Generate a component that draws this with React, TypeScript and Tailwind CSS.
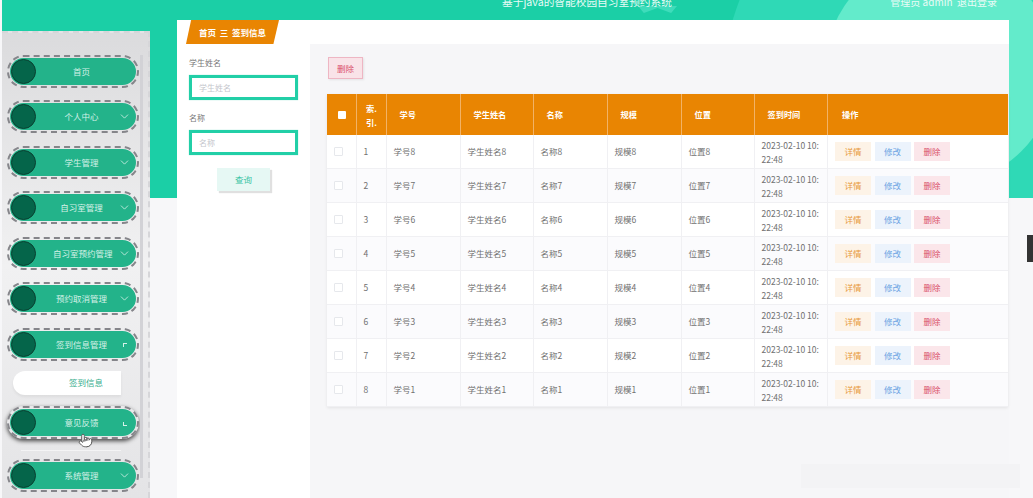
import React from 'react';
import { ChevronDown, Pointer } from 'lucide-react';

const font = { fontFamily: '"Noto Sans CJK SC", "Noto Sans", sans-serif' };

const menus = [
  { label: '首页', arrow: false },
  { label: '个人中心', arrow: true },
  { label: '学生管理', arrow: true },
  { label: '自习室管理', arrow: true },
  { label: '自习室预约管理', arrow: true },
  { label: '预约取消管理', arrow: true },
];

const rows = [8, 7, 6, 5, 4, 3, 2, 1];

const MenuItem = ({ label, arrow = true, corner, hover }: { label: string; arrow?: boolean; corner?: 'up' | 'down'; hover?: boolean }) => (
  <div className={`h-[33px] w-[132px] rounded-full border-2 border-dashed border-[#85858a] p-[1px] ${hover ? 'shadow-[0_2px_4px_rgba(0,0,0,0.7)]' : ''}`}>
    <div className="relative flex h-full items-center rounded-full bg-[#23b38a] pl-[43px] pr-[26px]">
      <div className="absolute left-[1px] top-[1px] h-[25px] w-[25px] rounded-full border border-[#0a3f30] bg-[#05654a]" />
      <span className="flex-1 whitespace-nowrap text-center text-[8.5px] text-[#d5f1e7]">{label}</span>
      {arrow && !corner && <ChevronDown size={13} strokeWidth={1.5} className="absolute right-[5px] text-[#d5f1e8]" />}
      {corner === 'up' && <span className="absolute right-[9px] top-[12px] h-[4px] w-[4px] border-l border-t border-[#d5f1e8]" />}
      {corner === 'down' && <span className="absolute right-[9px] top-[13px] h-[4px] w-[4px] border-b border-l border-[#d5f1e8]" />}
    </div>
  </div>
);

const Sidebar = () => (
  <aside className="relative flex h-[467px] w-[148px] shrink-0 flex-col overflow-hidden border-r-2 border-t-2 border-dashed border-[#d6d6d9] bg-gradient-to-b from-[#dbdbdd] via-[#f1f1f2] to-[#e4e4e6] pl-[5px] pt-[21.5px]">
    <div className="absolute right-[5px] top-[22px] h-[423px] w-[3px] bg-[#d2d2d6]" />
    <div className="flex flex-col gap-[12.5px]">
      {menus.map((m) => (
        <MenuItem key={m.label} label={m.label} arrow={m.arrow} />
      ))}
      <MenuItem label="签到信息管理" corner="up" />
    </div>
    <div className="ml-[6px] mt-[10px] flex h-[24px] w-[108px] items-center justify-end rounded-l-full bg-white pr-[18px] text-[8.5px] text-[#36ad8c] shadow-[0_2px_3px_rgba(0,0,0,0.06)]">
      签到信息
    </div>
    <div className="mt-[11px]">
      <MenuItem label="意见反馈" corner="down" hover />
    </div>
    <div className="ml-[14px] mt-[11px] h-px w-[100px] bg-[#f4f4f5]" />
    <div className="mt-[8px]">
      <MenuItem label="系统管理" />
    </div>
  </aside>
);

const Field = ({ label }: { label: string }) => (
  <div>
    <div className="mb-[4px] text-[8px] leading-[16px] text-[#777]">{label}</div>
    <div className="flex h-[25px] w-[109px] items-center border-[3px] border-[#22cfa7] bg-white pl-[7px] text-[8px] text-[#c4c6cc] shadow-[0_0_1px_rgba(34,207,167,0.5)]">
      {label}
    </div>
  </div>
);

const Filter = () => (
  <div className="flex w-[133px] shrink-0 flex-col bg-white pl-[12px] pt-[11px]">
    <div className="flex flex-col gap-[10px]">
      <Field label="学生姓名" />
      <Field label="名称" />
    </div>
    <button className="ml-[28px] mt-[13px] block h-[23px] w-[53px] bg-[#e6f8f4] text-[8.5px] text-[#3cc5a5] shadow-[2px_2px_1px_rgba(0,0,0,0.12)]">
      查询
    </button>
  </div>
);

const cols = 'grid grid-cols-[30px_30px_74px_73px_74px_74px_73px_73px_1fr]';
const cell = 'flex items-center border-r border-[#f0f0f3] pl-[6.5px] text-[8.5px] text-[#707070]';

const Head = () => (
  <div className={`${cols} h-[41px] bg-[#e98502] text-[8.2px] font-bold text-white`}>
    <div className="flex items-center justify-center border-r border-[#f2b266]">
      <span className="h-[8px] w-[8px] rounded-[1px] bg-white" />
    </div>
    <div className="flex items-center justify-center border-r border-[#f2b266] text-center leading-[14px]">
      索.
      <br />
      引.
    </div>
    {['学号', '学生姓名', '名称', '规模', '位置', '签到时间'].map((t) => (
      <div key={t} className="flex items-center border-r border-[#f2b266] pl-[12.5px]">{t}</div>
    ))}
    <div className="flex items-center pl-[14px]">操作</div>
  </div>
);

const Row = ({ n, i }: { n: number; i: number }) => (
  <div className={`${cols} h-[34px] border-b border-[#f0f0f3] ${i % 2 ? 'bg-[#fbfbfd]' : 'bg-white'}`}>
    <div className={cell}>
      <span className="h-[9px] w-[9px] rounded-[1px] border border-[#e6e8ec] bg-white" />
    </div>
    <div className={cell}>{i + 1}</div>
    <div className={cell}>学号{n}</div>
    <div className={cell}>学生姓名{n}</div>
    <div className={cell}>名称{n}</div>
    <div className={cell}>规模{n}</div>
    <div className={cell}>位置{n}</div>
    <div className={`${cell} leading-[14px]`}>2023-02-10 10:<br />22:48</div>
    <div className="flex items-center gap-[3.5px] pl-[7px] text-[8.5px]">
      <span className="flex h-[19px] w-[36px] items-center justify-center bg-[#fdf3e7] text-[#e89a3c]">详情</span>
      <span className="flex h-[19px] w-[36px] items-center justify-center bg-[#ecf3fc] text-[#6ba3e3]">修改</span>
      <span className="flex h-[19px] w-[36px] items-center justify-center bg-[#fbe6ea] text-[#d9506a]">删除</span>
    </div>
  </div>
);

export default function App() {
  return (
    <div className="relative h-[498px] w-[1033px] overflow-hidden bg-[#f7f7f9] pl-[2px]" style={font}>
      {/* Teal Backdrop */}
      <div className="absolute left-[2px] right-0 top-0 h-[198px] overflow-hidden bg-[#1bcfa6]">
        <div className="absolute left-[719px] top-[-179px] h-[558px] w-[558px] rounded-full bg-[#2fd9b6]" />
        <div className="absolute left-[823px] top-[-45px] h-[230px] w-[230px] rounded-full bg-[#63ebcb]" />
        <div className="absolute left-[636px] top-[6px] h-[7px] w-[39px] bg-[#3fdcbb] [clip-path:polygon(0_0,100%_0,85%_100%,50%_30%,15%_100%)]" />
      </div>

      <header className="relative h-[20px] text-[#e9fbf6]">
        <span className="absolute left-[500px] top-[-2px] text-[10.7px] leading-[8px]">基于java的智能校园自习室预约系统</span>
        <span className="absolute right-[36px] top-[-2px] text-[10px] leading-[8px]">管理员 admin&nbsp;&nbsp;退出登录</span>
      </header>

      <div className="relative flex items-start">
        <div className="mt-[11px]">
          <Sidebar />
        </div>
        <main className="ml-[27px] w-[832px]">
          <div className="flex h-[24px] items-stretch bg-white">
            <div className="ml-[9px] flex w-[93px] items-center justify-center bg-[#e98502] text-[8.5px] font-bold text-white [clip-path:polygon(5.5%_0,100%_0,94%_100%,0_100%)]">
              首页&nbsp;&nbsp;三&nbsp;&nbsp;签到信息
            </div>
          </div>
          <div className="flex h-[454px]">
            <Filter />
            <div className="flex-1 bg-[#f6f6f8] pl-[17px] pr-[1px] pt-[13px]">
              <button className="ml-[1px] block h-[22px] w-[35px] border border-[#eeb6c3] bg-[#f9e3e8] text-[8.5px] text-[#d9506a] shadow-[1px_1px_2px_rgba(0,0,0,0.08)]">
                删除
              </button>
              <div className="mt-[15px] bg-white shadow-[0_1px_3px_rgba(0,0,0,0.08)]">
                <Head />
                {rows.map((n, i) => (
                  <Row key={n} n={n} i={i} />
                ))}
              </div>
            </div>
          </div>
        </main>
      </div>

      {/* Cursor + overlays */}
      <Pointer size={15} strokeWidth={1.5} className="absolute left-[78px] top-[433px] fill-white text-[#555]" />
      <div className="absolute left-[801px] top-[464px] h-[24px] w-[219px] bg-[#f3f3f5]" />
      <div className="absolute right-0 top-[235px] h-[27px] w-[6px] bg-[#333]" />
    </div>
  );
}
